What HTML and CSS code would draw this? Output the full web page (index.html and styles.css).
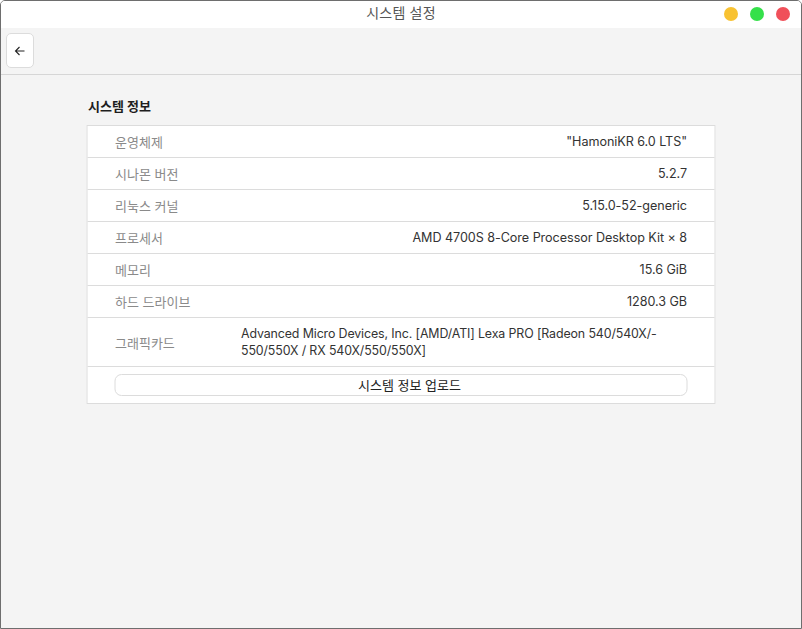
FILE: index.html
```html
<!DOCTYPE html>
<html lang="ko">
<head>
<meta charset="utf-8">
<title>시스템 설정</title>
<link rel="stylesheet" href="styles.css">
</head>
<body>
<div class="window">
  <div class="titlebar">
    <div class="title">시스템 설정</div>
    <div class="controls">
      <span class="dot dot-min"></span>
      <span class="dot dot-max"></span>
      <span class="dot dot-close"></span>
    </div>
  </div>
  <div class="toolbar">
    <button class="back" aria-label="뒤로">
      <svg width="12" height="12" viewBox="0 0 12 12"><path d="M10.5 6H1.5M5.5 2L1.5 6L5.5 10" fill="none" stroke="#222" stroke-width="1.1"/></svg>
    </button>
  </div>
  <main class="content">
    <h2 class="heading">시스템 정보</h2>
    <div class="card">
      <div class="row"><span class="label">운영체제</span><span class="value">"HamoniKR 6.0 LTS"</span></div>
      <div class="row"><span class="label">시나몬 버전</span><span class="value">5.2.7</span></div>
      <div class="row"><span class="label">리눅스 커널</span><span class="value">5.15.0-52-generic</span></div>
      <div class="row"><span class="label">프로세서</span><span class="value">AMD 4700S 8-Core Processor Desktop Kit × 8</span></div>
      <div class="row"><span class="label">메모리</span><span class="value">15.6 GiB</span></div>
      <div class="row"><span class="label">하드 드라이브</span><span class="value">1280.3 GB</span></div>
      <div class="row row-tall"><span class="label">그래픽카드</span><span class="value value-left">Advanced Micro Devices, Inc. [AMD/ATI] Lexa PRO [Radeon 540/540X/-<br>550/550X / RX 540X/550/550X]</span></div>
      <div class="row-btn"><button class="upload">시스템 정보 업로드</button></div>
    </div>
  </main>
</div>
</body>
</html>
```

FILE: styles.css
```css
* { box-sizing: border-box; }
html, body { margin: 0; padding: 0; }
body {
  width: 802px;
  height: 629px;
  font-family: Inter, "Noto Sans CJK KR", "Noto Sans", sans-serif;
  font-size: 13px;
  color: #333;
  background: #fff;
}
.window {
  width: 802px;
  height: 629px;
  border: 1px solid #6e6e6e;
  border-radius: 5px 5px 0 0;
  background: #f4f4f4;
  display: flex;
  flex-direction: column;
  overflow: hidden;
}
.titlebar {
  height: 27px;
  flex: none;
  background: #fff;
  display: flex;
  align-items: flex-start;
  justify-content: center;
  position: relative;
}
.title {
  font-size: 14px;
  line-height: 24px;
  color: #555;
  letter-spacing: 0.2px;
}
.controls {
  position: absolute;
  right: 11px;
  top: 6px;
  display: flex;
  gap: 12px;
}
.dot {
  width: 14px;
  height: 14px;
  border-radius: 50%;
  display: block;
}
.dot-min { background: #f8c232; }
.dot-max { background: #35e04a; }
.dot-close { background: #f0505a; }
.toolbar {
  height: 47px;
  flex: none;
  border-bottom: 1px solid #d6d6d6;
  padding: 5px 0 0 5px;
}
.back {
  width: 28px;
  height: 35px;
  background: #fff;
  border: 1px solid #dcdcdc;
  border-radius: 5px;
  padding: 0;
  display: flex;
  align-items: center;
  justify-content: center;
}
.content {
  padding-top: 22px;
}
.heading {
  margin: 0 0 10px 87px;
  font-size: 13px;
  font-weight: 700;
  color: #1e1e1e;
  line-height: 18px;
}
.card {
  width: 629px;
  margin: 0 auto;
  background: #fff;
  border: 1px solid #dcdcdc;
  transform: translateX(-0.5px);
}
.row {
  display: grid;
  grid-template-columns: 126px 1fr;
  align-items: center;
  height: 32px;
  padding: 0 27px 0 28px;
  border-bottom: 1px solid #dcdcdc;
}
.row-tall {
  height: 49px;
}
.label {
  color: #8a8a8a;
}
.value {
  text-align: right;
  color: #333;
  font-size: 12.6px;
  letter-spacing: -0.05px;
}
.value-left {
  text-align: left;
  line-height: 17px;
  font-size: 12.4px;
  letter-spacing: -0.12px;
}
.row-btn {
  padding: 7px 27px 7px 27px;
}
.upload {
  display: block;
  width: 100%;
  height: 22px;
  background: #fff;
  border: 1px solid #dcdcdc;
  border-radius: 7px;
  font-family: inherit;
  font-size: 13px;
  line-height: 18px;
  color: #222;
  padding: 0 0 0 18px;
}
```
